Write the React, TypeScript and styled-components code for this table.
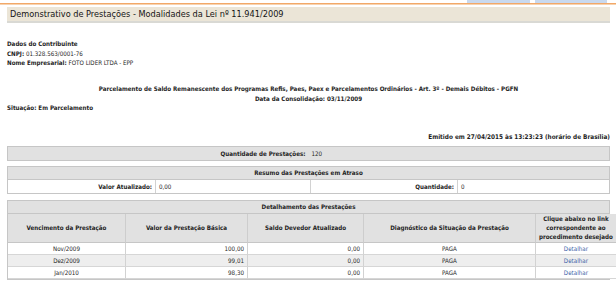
import React from "react";
import styled, { createGlobalStyle } from "styled-components";

const Global = createGlobalStyle`
  html, body { margin: 0; padding: 0; background: #ffffff; }
  body {
    font-family: "DejaVu Sans Condensed", "DejaVu Sans", sans-serif;
    font-size: 6.2px;
    color: #1e1e1e;
    width: 616px;
    height: 282px;
    overflow: hidden;
  }
  * { box-sizing: border-box; }
`;

const Page = styled.div`
  width: 616px;
  display: flex;
  flex-direction: column;
`;

const TopStrip = styled.div`
  height: 3px;
  display: flex;
  justify-content: flex-end;
  gap: 5px;
  padding-right: 9px;
`;

const Tab = styled.div<{ $w: number }>`
  width: ${(p) => p.$w}px;
  height: 3px;
  background: #c9d9ee;
`;

const OrangeLine = styled.div`
  height: 2px;
  background: #f2a868;
  border-bottom: 1px solid #f7d3b0;
`;

const Content = styled.div`
  padding: 2px 6px 0 7px;
  display: flex;
  flex-direction: column;
`;

const TitleBar = styled.div`
  height: 16px;
  background: #ebe5d7;
  border-bottom: 2px solid #d9d9d4;
  display: flex;
  align-items: center;
  padding-left: 3px;
  font-size: 9.1px;
  color: #141414;
`;

const Line = styled.div<{ $mt?: number; $align?: string }>`
  line-height: 9.5px;
  height: 9.5px;
  margin-top: ${(p) => p.$mt ?? 0}px;
  text-align: ${(p) => p.$align ?? "left"};
  white-space: nowrap;
`;

const B = styled.b`
  font-weight: bold;
`;

const Emitted = styled.div`
  margin-top: 19px;
  text-align: right;
  font-weight: bold;
  font-size: 6.4px;
  line-height: 10px;
  height: 10px;
`;

const Box = styled.div<{ $mt: number }>`
  margin-top: ${(p) => p.$mt}px;
  border: 1px solid #c6c6c6;
  display: flex;
  flex-direction: column;
`;

const GrayRow = styled.div<{ $h: number }>`
  height: ${(p) => p.$h}px;
  background: #e1e1e1;
  display: grid;
  grid-template-columns: 1fr 1fr;
  align-items: center;
`;

const HeadRow = styled.div<{ $h: number }>`
  height: ${(p) => p.$h}px;
  background: #e1e1e1;
  display: flex;
  align-items: center;
  justify-content: center;
  font-weight: bold;
  border-bottom: 1px solid #c6c6c6;
`;

const Label = styled.div`
  text-align: right;
  font-weight: bold;
  padding-right: 3px;
`;

const Value = styled.div`
  padding-left: 3px;
`;

const FourRow = styled.div`
  height: 13px;
  background: #fff;
  display: grid;
  grid-template-columns: 148px 155px 147px 1fr;
  align-items: stretch;
`;

const Cell = styled.div<{ $align?: string; $bold?: boolean; $last?: boolean; $link?: boolean }>`
  display: flex;
  align-items: center;
  justify-content: ${(p) =>
    p.$align === "right" ? "flex-end" : p.$align === "center" ? "center" : "flex-start"};
  text-align: ${(p) => p.$align ?? "left"};
  font-weight: ${(p) => (p.$bold ? "bold" : "normal")};
  padding: 0 3px;
  border-right: ${(p) => (p.$last ? "none" : "1px solid #d2d2d2")};
  color: ${(p) => (p.$link ? "#3d64a8" : "inherit")};
  white-space: nowrap;
`;

const Table = styled.div`
  display: grid;
  grid-template-columns: 118px 122px 116px 172px 1fr;
`;

const ColHead = styled(Cell)`
  height: 29px;
  background: #e1e1e1;
  justify-content: center;
  text-align: center;
  font-weight: bold;
  line-height: 9px;
  border-right: ${(p) => (p.$last ? "none" : "1px solid #cdcdcd")};
  border-bottom: 1px solid #c6c6c6;
`;

const DataCell = styled(Cell)<{ $alt: boolean }>`
  height: 12px;
  background: ${(p) => (p.$alt ? "#eeeeee" : "#ffffff")};
  border-bottom: 1px solid #d6d6d6;
`;

const rows = [
  { venc: "Nov/2009", valor: "100,00", saldo: "0,00", diag: "PAGA" },
  { venc: "Dez/2009", valor: "99,01", saldo: "0,00", diag: "PAGA" },
  { venc: "Jan/2010", valor: "98,30", saldo: "0,00", diag: "PAGA" },
];

export default function App() {
  return (
    <Page>
      <Global />
      <TopStrip>
        <Tab $w={63} />
        <Tab $w={72} />
      </TopStrip>
      <OrangeLine />
      <Content>
        <TitleBar>Demonstrativo de Prestações - Modalidades da Lei nº 11.941/2009</TitleBar>
        <Line $mt={16}>
          <B>Dados do Contribuinte</B>
        </Line>
        <Line>
          <B>CNPJ:</B> 01.328.563/0001-76
        </Line>
        <Line>
          <B>Nome Empresarial:</B> FOTO LIDER LTDA - EPP
        </Line>
        <Line $mt={16.5} $align="center">
          <B>
            Parcelamento de Saldo Remanescente dos Programas Refis, Paes, Paex e Parcelamentos
            Ordinários - Art. 3º - Demais Débitos - PGFN
          </B>
        </Line>
        <Line $align="center">
          <B>Data da Consolidação: 03/11/2009</B>
        </Line>
        <Line>
          <B>Situação: Em Parcelamento</B>
        </Line>
        <Emitted>Emitido em 27/04/2015 às 13:23:23 (horário de Brasília)</Emitted>
        <Box $mt={4}>
          <GrayRow $h={13}>
            <Label>Quantidade de Prestações:</Label>
            <Value>120</Value>
          </GrayRow>
        </Box>
        <Box $mt={5}>
          <HeadRow $h={13}>Resumo das Prestações em Atraso</HeadRow>
          <FourRow>
            <Cell $align="right" $bold>
              Valor Atualizado:
            </Cell>
            <Cell>0,00</Cell>
            <Cell $align="right" $bold>
              Quantidade:
            </Cell>
            <Cell $last>0</Cell>
          </FourRow>
        </Box>
        <Box $mt={6}>
          <HeadRow $h={13}>Detalhamento das Prestações</HeadRow>
          <Table>
            <ColHead>Vencimento da Prestação</ColHead>
            <ColHead>Valor da Prestação Básica</ColHead>
            <ColHead>Saldo Devedor Atualizado</ColHead>
            <ColHead>Diagnóstico da Situação da Prestação</ColHead>
            <ColHead $last>
              Clique abaixo no link
              <br />
              correspondente ao
              <br />
              procedimento desejado
            </ColHead>
            {rows.map((r, i) => (
              <React.Fragment key={r.venc}>
                <DataCell $alt={i % 2 === 1} $align="center">
                  {r.venc}
                </DataCell>
                <DataCell $alt={i % 2 === 1} $align="right">
                  {r.valor}
                </DataCell>
                <DataCell $alt={i % 2 === 1} $align="right">
                  {r.saldo}
                </DataCell>
                <DataCell $alt={i % 2 === 1} $align="center">
                  {r.diag}
                </DataCell>
                <DataCell $alt={i % 2 === 1} $align="center" $last $link>
                  Detalhar
                </DataCell>
              </React.Fragment>
            ))}
          </Table>
        </Box>
      </Content>
    </Page>
  );
}
